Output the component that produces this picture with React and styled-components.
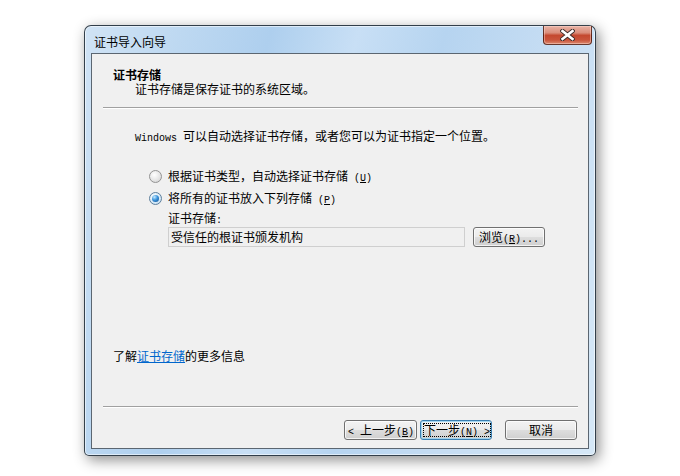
import React from 'react';
import styled, { createGlobalStyle } from 'styled-components';

const GlobalStyle = createGlobalStyle`
  html, body {
    margin: 0;
    background: #ffffff;
  }
  body {
    font-family: "Noto Sans CJK SC", "Liberation Sans", sans-serif;
    font-size: 12px;
    color: #000000;
  }
`;

const Page = styled.div`
  display: flex;
  justify-content: center;
  align-items: flex-start;
  width: 680px;
  height: 476px;
  padding-top: 25px;
  box-sizing: border-box;
`;

const Window = styled.div`
  display: flex;
  flex-direction: column;
  width: 512px;
  height: 431px;
  box-sizing: border-box;
  padding: 0 6px 6px;
  border: 1px solid rgba(25, 35, 45, 0.85);
  border-radius: 7px 7px 5px 5px;
  background: linear-gradient(
    105deg,
    #d0e3f5 0%,
    #bdd8f1 16%,
    #aecfee 30%,
    #c8dff5 44%,
    #b6d4f0 58%,
    #c6ddf3 76%,
    #d6e8f7 100%
  );
  box-shadow:
    inset 0 0 0 1px rgba(255, 255, 255, 0.55),
    3px 4px 14px rgba(0, 0, 0, 0.45);
`;

const TitleBar = styled.div`
  display: flex;
  justify-content: space-between;
  align-items: flex-start;
  flex-shrink: 0;
  height: 27px;
  margin: 0 -6px;
  padding: 0 3px 0 9px;
`;

const Title = styled.span`
  padding-top: 9px;
  line-height: 14px;
  font-size: 12px;
  color: #000;
`;

const CloseButton = styled.div`
  display: flex;
  justify-content: center;
  align-items: center;
  width: 49px;
  height: 19px;
  box-sizing: border-box;
  border: 1px solid rgba(70, 25, 15, 0.8);
  border-top: none;
  border-radius: 0 0 4px 4px;
  background: linear-gradient(
    180deg,
    #e8b3a6 0%,
    #da8d7a 38%,
    #c4482f 52%,
    #c9543b 78%,
    #dc8a70 100%
  );
  box-shadow: inset 0 0 0 1px rgba(255, 220, 210, 0.45);
`;

const Client = styled.div`
  display: flex;
  flex-direction: column;
  flex: 1;
  background: #f0f0f0;
  border: 1px solid #5b6671;
`;

const Header = styled.div`
  display: flex;
  flex-direction: column;
  padding: 14px 0 0 21px;
  line-height: 14px;
`;

const Heading = styled.div`
  font-weight: bold;
`;

const SubHeading = styled.div`
  padding-left: 22px;
`;

const Separator = styled.div`
  flex-shrink: 0;
  height: 0;
  margin: ${p => p.$top || 0}px 10px 0 11px;
  border-top: 1px solid #a0a0a0;
  border-bottom: 1px solid #ffffff;
`;

const Body = styled.div`
  display: flex;
  flex-direction: column;
  flex: 1;
  padding-left: 21px;
  line-height: 14px;
`;

const Line = styled.div`
  height: 14px;
  line-height: 14px;
  white-space: nowrap;
`;

const Mono = styled.span`
  font-family: "Liberation Mono", "DejaVu Sans Mono", monospace;
  font-size: 10px;
  line-height: 1;
  white-space: pre;
`;

const Intro = styled(Line)`
  margin: 20px 0 0 22px;
`;

const Options = styled.div`
  display: flex;
  flex-direction: column;
  gap: 6px;
  margin: 25px 0 0 36px;
`;

const OptionRow = styled.div`
  display: flex;
  align-items: center;
  gap: 6px;
  height: 16px;
  white-space: nowrap;
`;

const Radio = styled.span`
  display: inline-flex;
  justify-content: center;
  align-items: center;
  width: 13px;
  height: 13px;
  box-sizing: border-box;
  border-radius: 50%;
  border: 1px solid ${p => (p.$checked ? '#5e7f9c' : '#939393')};
  background: ${p =>
    p.$checked
      ? 'radial-gradient(circle at 40% 35%, #ffffff, #d6e9f7 60%, #b9d3e8)'
      : 'radial-gradient(circle at 40% 35%, #ffffff, #e6e6e6 55%, #cdcdcd)'};
  &::after {
    content: '';
    display: ${p => (p.$checked ? 'block' : 'none')};
    width: 7px;
    height: 7px;
    border-radius: 50%;
    background: radial-gradient(circle at 35% 30%, #c4ebff, #3a93dc 45%, #0c4d8c 100%);
  }
`;

const StoreGroup = styled.div`
  display: flex;
  flex-direction: column;
  margin: 5px 0 0 55px;
`;

const StoreRow = styled.div`
  display: flex;
  align-items: center;
  gap: 8px;
  margin-top: 2px;
`;

const StoreField = styled.div`
  width: 297px;
  height: 20px;
  box-sizing: border-box;
  padding-left: 2px;
  border: 1px solid #cfcfcf;
  background: #f0f0f0;
  line-height: 18px;
  white-space: nowrap;
`;

const Button = styled.div`
  display: flex;
  width: ${p => p.$width || 72}px;
  height: 20px;
  box-sizing: border-box;
  padding: 2px;
  border: 1px solid ${p => (p.$default ? '#3c7fb1' : '#707070')};
  border-radius: 3px;
  background: linear-gradient(
    180deg,
    #f3f3f3 0%,
    #ebebeb 48%,
    #dddddd 52%,
    #cfcfcf 100%
  );
  box-shadow: inset 0 0 0 1px
    ${p => (p.$default ? 'rgba(150, 210, 242, 0.85)' : 'rgba(255, 255, 255, 0.75)')};
`;

const ButtonLabel = styled.span`
  display: block;
  flex: 1;
  box-sizing: border-box;
  border: 1px dotted ${p => (p.$focused ? '#000' : 'transparent')};
  line-height: 12px;
  text-align: center;
  white-space: nowrap;
`;

const Link = styled(Line)`
  margin: auto 0 43px;
  a {
    color: #0066cc;
    text-decoration: underline;
  }
`;

const ButtonRow = styled.div`
  display: flex;
  justify-content: flex-end;
  align-items: center;
  padding: 12px 11px 8px 0;
  .spacer {
    width: 13px;
  }
`;

const ButtonPair = styled.div`
  display: flex;
  gap: 3px;
`;

const CloseIcon = () => (
  <svg width="15" height="12" viewBox="0 0 15 12">
    <path d="M2.5 2 L12.5 10 M12.5 2 L2.5 10" stroke="#3a2a28" strokeWidth="4.4" strokeLinecap="square" />
    <path d="M2.5 2 L12.5 10 M12.5 2 L2.5 10" stroke="#ffffff" strokeWidth="2.6" strokeLinecap="square" />
  </svg>
);

const Key = ({ k }) => (
  <Mono>
    (<u>{k}</u>)
  </Mono>
);

const App = () => {
  return (
    <>
      <GlobalStyle />
      <Page>
        <Window>
          <TitleBar>
            <Title>证书导入向导</Title>
            <CloseButton>
              <CloseIcon />
            </CloseButton>
          </TitleBar>
          <Client>
            <Header>
              <Heading>证书存储</Heading>
              <SubHeading>证书存储是保存证书的系统区域。</SubHeading>
            </Header>
            <Separator $top={11} />
            <Body>
              <Intro>
                <Mono>Windows </Mono>可以自动选择证书存储，或者您可以为证书指定一个位置。
              </Intro>
              <Options>
                <OptionRow>
                  <Radio />
                  <span>
                    根据证书类型，自动选择证书存储<Mono> </Mono><Key k="U" />
                  </span>
                </OptionRow>
                <OptionRow>
                  <Radio $checked />
                  <span>
                    将所有的证书放入下列存储<Mono> </Mono><Key k="P" />
                  </span>
                </OptionRow>
              </Options>
              <StoreGroup>
                <Line>
                  证书存储<Mono>:</Mono>
                </Line>
                <StoreRow>
                  <StoreField>受信任的根证书颁发机构</StoreField>
                  <Button $width={72}>
                    <ButtonLabel>
                      浏览<Key k="R" /><Mono>...</Mono>
                    </ButtonLabel>
                  </Button>
                </StoreRow>
              </StoreGroup>
              <Link>
                了解<a>证书存储</a>的更多信息
              </Link>
            </Body>
            <Separator />
            <ButtonRow>
              <ButtonPair>
                <Button $width={73}>
                  <ButtonLabel>
                    <Mono>&lt; </Mono>上一步<Key k="B" />
                  </ButtonLabel>
                </Button>
                <Button $width={72} $default>
                  <ButtonLabel $focused>
                    下一步<Key k="N" /><Mono> &gt;</Mono>
                  </ButtonLabel>
                </Button>
              </ButtonPair>
              <span className="spacer" />
              <Button $width={72}>
                <ButtonLabel>取消</ButtonLabel>
              </Button>
            </ButtonRow>
          </Client>
        </Window>
      </Page>
    </>
  );
};

export default App;
